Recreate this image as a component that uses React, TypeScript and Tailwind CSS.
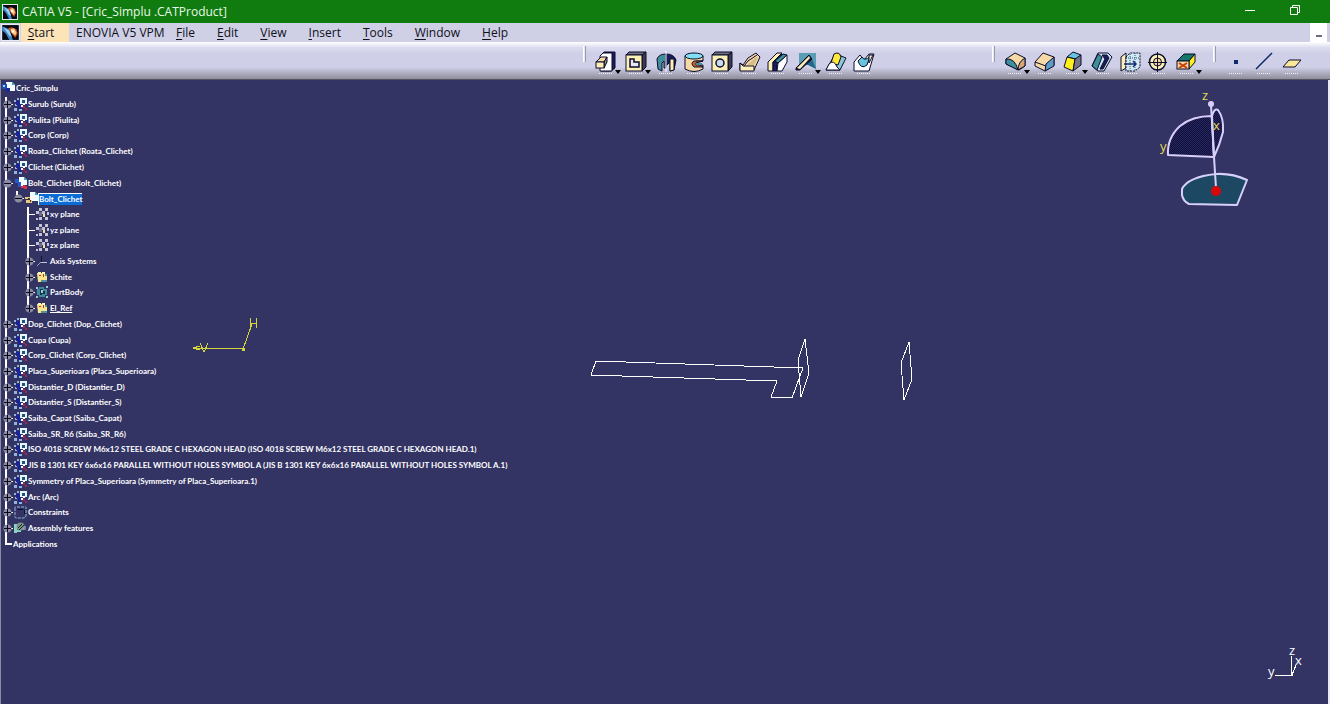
import type { ReactNode } from "react";

const INK = "#0b0b2e";
const CREAM = "#fdf0b4";
const TEAL = "#3f8f9b";
const TAN = "#f6d9a4";

function AppLogo({ size }: { size: string }) {
  return (
    <svg viewBox="0 0 16 16" preserveAspectRatio="none" className={`block shrink-0 ${size}`} aria-hidden="true">
      <rect width="16" height="16" fill="#e8e8f0" />
      <rect x="1" y="1" width="14" height="14" fill="#050a14" />
      <path d="M1 2 L7 5 L10 15 L7 15 L4 9 L1 6Z" fill="#3f86c4" />
      <path d="M2 3 L7 6 L9 12 L7 11Z" fill="#9cd0f0" />
      <path d="M6 4 L9 3 L13 5 L14 9 L12 13 L9 9Z" fill="#c8551e" />
      <path d="M8 5 L11 4 L13 8 L12 11 L9 8Z" fill="#ffc98a" />
      <path d="M9 6h2v2h-2z" fill="#fff" />
    </svg>
  );
}

type Tool = { name: string; menu?: boolean; art: ReactNode };

const sketchTools: Tool[] = [
  {
    name: "Pad",
    menu: true,
    art: (
      <>
        <path d="M9 6 L12 2 H23 V18 L19 21 H9Z" fill="#1c1c5c" stroke={INK} />
        <path d="M8 6 L11 3 H20 V21 H8Z" fill="#fff" stroke={INK} />
        <path d="M4 12 L9 7 H15 L12 12Z" fill={TAN} stroke={INK} />
        <path d="M12 12 L15 7 V12 L12 18Z" fill="#8a8a70" stroke={INK} />
        <rect x="4" y="12" width="8" height="6" fill={CREAM} stroke={INK} />
      </>
    ),
  },
  {
    name: "Pocket",
    menu: true,
    art: (
      <>
        <path d="M4 5 L7 2 H24 L20 5Z" fill="#70707c" stroke={INK} />
        <path d="M20 5 L24 2 V17 L20 21Z" fill="#3c3c4c" stroke={INK} />
        <rect x="4" y="5" width="16" height="16" fill={CREAM} stroke={INK} />
        <path d="M8 9 H12 V12 H17 V17 H8Z" fill="#e6e6f4" stroke={INK} strokeWidth="1.5" />
      </>
    ),
  },
  {
    name: "Shaft",
    art: (
      <>
        <path d="M5 9 Q7 4 14 4 V18 H12 V11 L10 13 V21 L6 19Z" fill={TEAL} stroke={INK} />
        <path d="M14 4 Q22 4 24 10 L22 20 L18 21 V12 L14 16Z" fill="#1c1c5c" stroke={INK} />
        <path d="M18 9 H22 V20 L18 21Z" fill={CREAM} stroke={INK} />
        <path d="M14 1 V22" stroke="#fff" />
      </>
    ),
  },
  {
    name: "Groove",
    art: (
      <>
        <path d="M5 6 V19 Q14 24 23 19 V15 H16 V11 H23 V6Z" fill={TAN} stroke={INK} />
        <ellipse cx="14" cy="6" rx="9" ry="3" fill="#7fe0f4" stroke={INK} />
        <path d="M23 11 H14 Q10 13 14 17 H23 L20 15 H16 V13Z" fill="#c4622e" stroke={INK} />
        <path d="M16 13 H22 V15 H16Z" fill={TEAL} />
      </>
    ),
  },
  {
    name: "Hole",
    art: (
      <>
        <path d="M4 5 L7 2 H24 L20 5Z" fill="#70707c" stroke={INK} />
        <path d="M20 5 L24 2 V17 L20 21Z" fill="#3c3c4c" stroke={INK} />
        <rect x="4" y="5" width="16" height="16" fill={CREAM} stroke={INK} />
        <circle cx="12" cy="13" r="4" fill="#c8dcf0" stroke={INK} strokeWidth="1.5" />
      </>
    ),
  },
  {
    name: "Rib",
    art: (
      <>
        <path d="M4 13 L7 15 L12 8 L20 3 L24 7 L18 20 H4Z" fill={TAN} stroke={INK} />
        <path d="M4 13 L7 16 H18 V21 H4Z" fill={CREAM} stroke={INK} />
        <path d="M8 16 L12 11 L21 5" fill="none" stroke={INK} />
        <path d="M11 15 L20 7 L22 8 L18 15Z" fill="#d9bd88" />
      </>
    ),
  },
  {
    name: "Slot",
    art: (
      <>
        <path d="M4 12 L13 3 H18 L9 12 V21 H4Z" fill={CREAM} stroke={INK} />
        <path d="M9 12 L18 4 L19 8 L13 14 V21 H9Z" fill="#1c1c5c" stroke={INK} />
        <path d="M14 13 L23 5 V12 L18 21 H13Z" fill="#fff" stroke={INK} />
        <path d="M14 13 L23 5 L19 4 L11 11Z" fill={TEAL} stroke={INK} />
      </>
    ),
  },
  {
    name: "Stiffener",
    menu: true,
    art: (
      <>
        <path d="M7 3 H24 V19 L20 15 H7Z" fill="#5a9eb4" />
        <path d="M16 7 L20 9 L24 19 L14 14Z" fill="#26668a" />
        <path d="M4 18 L17 5 L20 9 L8 20 H4Z" fill="#1c1c3c" stroke={INK} />
        <path d="M5 18 L17 6 L18 8 L8 19Z" fill={CREAM} />
      </>
    ),
  },
  {
    name: "Multi-sections Solid",
    art: (
      <>
        <path d="M4 20 L12 6 Q16 1 19 6 L24 8 L18 20Z" fill="#8cc8d4" stroke={INK} />
        <path d="M9 13 L12 4 Q17 1 19 7 L16 15Z" fill="#ffe83c" stroke={INK} />
        <path d="M4 20 L7 14 Q12 9 15 17 L18 20Z" fill="#fff" stroke={INK} />
      </>
    ),
  },
  {
    name: "Removed Multi-sections Solid",
    art: (
      <>
        <path d="M4 12 L10 5 L14 10 L19 4 H24 L19 21 H4Z" fill="#fff" stroke={INK} />
        <path d="M8 11 L12 7 Q15 12 20 6 L17 15 Q11 20 8 11Z" fill="#68c4dc" stroke={INK} />
        <path d="M19 5 H23 L19 13Z" fill={CREAM} stroke={INK} />
      </>
    ),
  },
];

const dressUpTools: Tool[] = [
  {
    name: "Edge Fillet",
    menu: true,
    art: (
      <>
        <path d="M5 9 L14 3 L24 8 V16 L18 20 L5 14Z" fill={TAN} stroke={INK} />
        <path d="M5 9 Q14 8 17 20 L5 14Z" fill={TEAL} stroke={INK} />
        <path d="M17 20 Q17 12 24 8 V16Z" fill="#d6a878" stroke={INK} />
      </>
    ),
  },
  {
    name: "Chamfer",
    art: (
      <>
        <path d="M4 12 L12 3 L23 7 V15 L14 21 L4 16Z" fill={TAN} stroke={INK} />
        <path d="M14 21 L15 14 L23 7 V16Z" fill="#5c9cc8" stroke={INK} />
        <path d="M4 12 L15 16" stroke={INK} />
      </>
    ),
  },
  {
    name: "Draft Angle",
    menu: true,
    art: (
      <>
        <path d="M8 7 L14 2 L22 5 L17 9Z" fill="#68c4dc" stroke={INK} />
        <path d="M8 7 L16 9 L14 21 L5 17Z" fill="#fff01c" stroke={INK} />
        <path d="M16 9 L22 5 V15 L14 21Z" fill="#747484" stroke={INK} />
      </>
    ),
  },
  {
    name: "Shell",
    art: (
      <>
        <path d="M3 16 L9 3 H19 L23 7 L15 21 H9Z" fill="#c8e4f0" stroke={INK} />
        <path d="M3 16 L9 4 L13 7 L8 20Z" fill={TEAL} stroke={INK} />
        <path d="M13 5 H18 L20 8 L14 19 H11 L16 9Z" fill="#1c1c5c" stroke={INK} />
      </>
    ),
  },
  {
    name: "Thickness",
    art: (
      <>
        <path d="M4 7 L9 3 V18 L4 21Z" fill={CREAM} stroke={INK} />
        <path d="M9 7 L13 3 H23 V17 L18 21 H9Z" fill="#d4e8f4" stroke={INK} strokeDasharray="2 1" />
        <path d="M13 4 V21 M18 3 V21 M9 8 H22" stroke="#1c5878" strokeDasharray="1 1" />
        <path d="M7 14 H19 M16 11 L19 14 L16 17" fill="none" stroke="#142c70" strokeWidth="1.5" />
      </>
    ),
  },
  {
    name: "Thread and Tap",
    art: (
      <>
        <circle cx="12.5" cy="12" r="8" fill={CREAM} stroke={INK} strokeWidth="1.5" />
        <circle cx="12.5" cy="12" r="4" fill={TAN} stroke={INK} />
        <path d="M3 12.5 H22 M12.5 2 V22" stroke={INK} />
      </>
    ),
  },
  {
    name: "Remove Face",
    menu: true,
    art: (
      <>
        <path d="M4 11 L11 4 H22 L16 11Z" fill="#16786c" stroke={INK} />
        <path d="M16 11 L22 4 V12 L16 19Z" fill="#fff01c" stroke={INK} />
        <rect x="4" y="11" width="12" height="8" fill={TAN} stroke={INK} />
        <path d="M6 13 L14 18 M14 13 L6 18" stroke="#c83c08" strokeWidth="2" />
      </>
    ),
  },
];

const referenceTools: Tool[] = [
  { name: "Point", art: <rect x="12" y="10" width="4" height="4" fill="#0c2c68" /> },
  { name: "Line", art: <path d="M6 19 L22 3" stroke="#0c2464" strokeWidth="1.5" /> },
  {
    name: "Plane",
    art: <path d="M5 17 L11 10 H23 L17 17Z" fill="#fbe79a" stroke={INK} />,
  },
];

function ToolGroup({ tools, label }: { tools: Tool[]; label: string }) {
  return (
    <div role="toolbar" aria-label={label} className="flex gap-[6px]">
      <span className="mt-1 h-4 w-[3px] border-r border-l border-r-[#9a9aae] border-l-white bg-[#e8e8f4]" />
      <div className="flex pt-2">
        {tools.map((t) => (
          <button
            key={t.name}
            type="button"
            aria-label={t.name}
            className={t.menu ? "flex h-6 w-[30px] items-end" : "flex h-6 w-7"}
          >
            <svg viewBox="0 0 28 24" className="h-6 w-7 shrink-0" fill="none" aria-hidden="true">
              {t.art}
              <path d="M7 23.5 H21" stroke="#f4f4fc" strokeDasharray="1 1" shapeRendering="crispEdges" />
            </svg>
            {t.menu && (
              <svg viewBox="0 0 6 4" className="-ml-[5px] h-1 w-[6px] shrink-0" aria-hidden="true">
                <path d="M0 0 H6 L3 4Z" fill="#000" />
              </svg>
            )}
          </button>
        ))}
      </div>
    </div>
  );
}

type Kind = "root" | "product" | "openProduct" | "part" | "plane" | "axis" | "set" | "body" | "constraints" | "features";

function NodeIcon({ kind }: { kind: Kind }) {
  const art: Record<Kind, ReactNode> = {
    root: (
      <>
        <path d="M4 0 H10 L13 3 V9 H5Z" fill="#f4feff" />
        <path d="M10 0 L13 3 H10Z" fill="#3ba4b4" />
        <rect x="0" y="2" width="5" height="5" fill="#1c4ec0" />
        <rect x="1" y="3" width="2" height="2" fill="#9cd0ff" />
        <rect x="4" y="6" width="4" height="4" fill="#1a2a90" />
      </>
    ),
    product: (
      <>
        <path d="M0 2h2v2h-2z M3 0h2v2h-2z M0 10h3v3h-3z M5 11h3v2h-3z M1 6h2v2h-2z" fill="#8fb4de" />
        <path d="M2 3h4v4h-4z M4 7h3v4h-3z" fill="#1a2496" />
        <path d="M6 0h7v6h-7z" fill="#e4f6fb" />
        <path d="M8 2h3v3h-3z" fill="#20547c" />
        <path d="M7 7h2v2h-2z M9 5h2v2h-2z" fill="#fff" />
        <path d="M9 8h2v2h-2z M11 10h2v2h-2z" fill="#b0244c" />
      </>
    ),
    openProduct: (
      <>
        <path d="M5 0 H10 L13 3 V8 H5Z" fill="#f4feff" />
        <path d="M10 0 L13 3 H10Z" fill="#3ba4b4" />
        <path d="M1 2h4v4h-4z M4 5h3v5h-3z" fill="#2458cc" />
        <path d="M7 8h4v3h-4z M10 9h3v3h-3z" fill="#d83048" />
        <path d="M7 7h2v2h-2z" fill="#fff" />
      </>
    ),
    part: (
      <>
        <path d="M5 0 H10 L13 3 V9 H5Z" fill="#f4feff" />
        <path d="M10 0 L13 3 H10Z" fill="#3ba4b4" />
        <path d="M0 5h5v2h-5z M1 8h6v3h-6z" fill="#e8c884" />
        <path d="M3 6h2v2h-2z M5 8h1v2h-1z" fill="#503018" />
      </>
    ),
    plane: (
      <>
        <path d="M3 0h3v3h-3z M9 0h3v3h-3z M0 3h3v3h-3z M6 3h3v3h-3z M3 9h3v3h-3z M9 9h3v3h-3z M0 10h2v2h-2z M11 4h2v3h-2z" fill="#c4c4d4" />
        <path d="M3 4h3v4h-3z" fill="#6c6c90" />
        <path d="M7 6h2v3h-2z" fill="#f4e8a0" />
      </>
    ),
    axis: (
      <>
        <path d="M5.5 1 V7" stroke="#111130" />
        <path d="M5 7.5 H11" stroke="#c4c4d8" />
        <path d="M5 7 L1 11" stroke="#a0a0b8" />
      </>
    ),
    set: (
      <>
        <path d="M1 2h8v2h2v7h-9z" fill="#f7e58e" />
        <path d="M2 1h3v2h-3z M6 1h3v2h-3z" fill="#fff4b8" />
        <path d="M3 4h2v1h-2z M7 3h1v3h-1z" fill="#c03828" />
        <path d="M9 3h2v2h-2z M5 9h6v2h-6z" fill="#4f8e9c" />
      </>
    ),
    body: (
      <>
        <path d="M3 1h5v2h3v6h-2v2h-6v-2h-2v-6h2z" fill="#3e8c98" />
        <path d="M4 3h3v2h2v3h-3v1h-2z" fill="#16324e" />
        <path d="M5 4h2v3h-2z M0 1h2v2h-2z M10 0h2v2h-2z M10 10h2v2h-2z M0 10h2v2h-2z" fill="#9ccad4" />
      </>
    ),
    constraints: (
      <>
        <path d="M1 3 Q0 0 3 1 H10 Q13 0 12 3 V9 Q12 12 9 12 H3 Q0 12 1 9Z" fill="#333364" stroke="#8fbcd8" strokeDasharray="3 1" />
        <path d="M4 3.5 H9 M10.5 4 V8" stroke="#0a0a28" />
      </>
    ),
    features: (
      <>
        <path d="M0 2h3v9h-3z M3 8h4v2h-4z" fill="#8cd0c0" />
        <circle cx="6.5" cy="4.5" r="4" fill="#7c948c" />
        <path d="M4 6 L8 2 M5 8 L10 3" stroke="#182420" />
        <path d="M9 7 H12 M10 5 H12" stroke="#c4c4d4" />
      </>
    ),
  };
  return (
    <svg viewBox="0 0 13 13" className="h-[13px] w-[13px] shrink-0" fill="none" aria-hidden="true">
      {art[kind]}
    </svg>
  );
}

function Expander({ open, name }: { open?: boolean; name: string }) {
  return (
    <button type="button" aria-label={`${open ? "Collapse" : "Expand"} ${name}`} aria-expanded={!!open} className="relative z-10 flex w-[11px] shrink-0 justify-center">
      <svg viewBox="0 0 11 9" className="h-[9px] w-[11px] shrink-0" aria-hidden="true">
        <rect x="8" y="4" width="3" height="1" fill="#fff" />
        <circle cx="5.5" cy="4.5" r="4" fill="#8c8ca0" />
        <path d={open ? "M2 4.5 H9" : "M2 4.5 H9 M5.5 1 V8"} stroke="#06061c" />
      </svg>
    </button>
  );
}

type Rail = "none" | "through" | "upper";

function Column({ rail, children }: { rail: Rail; children?: ReactNode }) {
  const span = { none: "hidden", through: "inset-y-0", upper: "top-0 bottom-1/2" }[rail];
  return (
    <span className="relative flex w-[11px] shrink-0 items-center self-stretch">
      <span className={`absolute left-[3px] w-[2px] bg-white ${span}`} />
      {children}
    </span>
  );
}

type Row = { text: string; kind: Kind; level: 1 | 2 | 3; open?: boolean; leaf?: boolean; last?: boolean; selected?: boolean; underline?: boolean };

const product = (text: string): Row => ({ text, kind: "product", level: 1 });

const rows: Row[] = [
  product("Surub (Surub)"),
  product("Piulita (Piulita)"),
  product("Corp (Corp)"),
  product("Roata_Clichet (Roata_Clichet)"),
  product("Clichet (Clichet)"),
  { text: "Bolt_Clichet (Bolt_Clichet)", kind: "openProduct", level: 1, open: true },
  { text: "Bolt_Clichet", kind: "part", level: 2, open: true, selected: true },
  { text: "xy plane", kind: "plane", level: 3, leaf: true },
  { text: "yz plane", kind: "plane", level: 3, leaf: true },
  { text: "zx plane", kind: "plane", level: 3, leaf: true },
  { text: "Axis Systems", kind: "axis", level: 3 },
  { text: "Schite", kind: "set", level: 3 },
  { text: "PartBody", kind: "body", level: 3 },
  { text: "El_Ref", kind: "set", level: 3, last: true, underline: true },
  product("Dop_Clichet (Dop_Clichet)"),
  product("Cupa (Cupa)"),
  product("Corp_Clichet (Corp_Clichet)"),
  product("Placa_Superioara (Placa_Superioara)"),
  product("Distantier_D (Distantier_D)"),
  product("Distantier_S (Distantier_S)"),
  product("Saiba_Capat (Saiba_Capat)"),
  product("Saiba_SR_R6 (Saiba_SR_R6)"),
  product("ISO 4018 SCREW M6x12 STEEL GRADE C HEXAGON HEAD (ISO 4018 SCREW M6x12 STEEL GRADE C HEXAGON HEAD.1)"),
  product("JIS B 1301 KEY 6x6x16 PARALLEL WITHOUT HOLES SYMBOL A (JIS B 1301 KEY 6x6x16 PARALLEL WITHOUT HOLES SYMBOL A.1)"),
  product("Symmetry of Placa_Superioara (Symmetry of Placa_Superioara.1)"),
  product("Arc (Arc)"),
  { text: "Constraints", kind: "constraints", level: 1 },
  { text: "Assembly features", kind: "features", level: 1 },
];

function TreeRow({ row }: { row: Row }) {
  const expander = row.leaf ? <span className="ml-1 h-px w-[7px] bg-white" /> : <Expander open={row.open} name={row.text} />;
  return (
    <li className="flex items-center">
      <Column rail="through">{row.level === 1 && expander}</Column>
      {row.level === 2 && <Column rail="upper">{expander}</Column>}
      {row.level === 3 && (
        <>
          <Column rail="none" />
          <Column rail={row.last ? "upper" : "through"}>{expander}</Column>
        </>
      )}
      <span className="ml-px flex">
        <NodeIcon kind={row.kind} />
      </span>
      <span
        className={
          row.selected
            ? "border-t border-l border-white bg-[#0a6cd6] leading-[11px]"
            : row.underline
              ? "ml-px leading-[11px] underline"
              : "ml-px leading-[11px]"
        }
      >
        {row.text}
      </span>
    </li>
  );
}

function SpecTree() {
  return (
    <ul aria-label="Specification tree" className="relative grid h-[471px] auto-rows-fr pl-px font-[Lato,'Noto_Sans',sans-serif] text-[8px] font-bold whitespace-nowrap text-white">
      <li className="flex items-center">
        <NodeIcon kind="root" />
        <span className="ml-px leading-[11px]">Cric_Simplu</span>
      </li>
      {rows.map((row, i) => (
        <TreeRow key={i} row={row} />
      ))}
      <li className="flex items-center">
        <Column rail="upper">
          <span className="ml-[3px] h-[2px] w-[7px] bg-white" />
        </Column>
        <span className="leading-[11px]">Applications</span>
      </li>
    </ul>
  );
}

function Geometry() {
  return (
    <svg viewBox="0 0 930 420" className="absolute top-0 left-0 h-[420px] w-[930px]" fill="none" shapeRendering="crispEdges" aria-hidden="true">
      <g stroke="#fff">
        <path d="M595 281 L802 288 L791 318 L770 317 L776 301 L590 295Z" />
        <path d="M804 259 L797 280 L800 317 L808 293Z" />
        <path d="M908 262 L900 283 L903 320 L911 299Z" />
      </g>
      <g stroke="#d4d43c">
        <path d="M192 268 H204 L242 269 L251 244" />
        <path d="M192 268 L199 266 M192 268 L199 270" />
        <path d="M199 263 L203 272 L207 263 M249 238 V248 M255 238 V248 M249 243 H255" />
      </g>
      <rect x="241" y="268" width="3" height="3" fill="#d4d43c" />
    </svg>
  );
}

function Compass() {
  return (
    <svg viewBox="0 0 188 135" className="absolute top-0 right-0 h-[135px] w-[188px]" fill="none" aria-label="Compass">
      <defs>
        <pattern id="hatch" width="2" height="2" patternUnits="userSpaceOnUse">
          <rect width="2" height="2" fill="#10103c" />
          <rect width="1" height="1" fill="#26265c" />
          <rect x="1" y="1" width="1" height="1" fill="#26265c" />
        </pattern>
      </defs>
      <g stroke="#d8d0fa" strokeWidth="2" strokeLinejoin="round">
        <path d="M72 36 Q52 36 40 46 Q27 58 28 75 L74 77Z" fill="url(#hatch)" />
        <path d="M72 36 Q74 28 78 30 Q84 38 83 52 Q80 64 74 77Z" fill="url(#hatch)" />
        <path d="M42 109 V115 Q43 121 49 124 L97 125 L107 100 Q92 93 76 94 Q48 97 42 109Z" fill="#1c4864" />
        <path d="M71 25 L74 77 L76 108" />
      </g>
      <circle cx="71" cy="24" r="3" fill="#d8d0fa" />
      <circle cx="76" cy="111" r="5" fill="#d80808" />
      <g fill="#e8dc54" className="font-['Open_Sans',sans-serif] text-[13px]">
        <text x="62" y="20">z</text>
        <text x="73" y="50">x</text>
        <text x="20" y="71">y</text>
      </g>
    </svg>
  );
}

function AxisTriad() {
  return (
    <svg viewBox="0 0 69 64" className="absolute right-0 bottom-0 h-16 w-[69px]" fill="none" aria-label="Axis orientation">
      <path d="M16 35.5 H34 M32.5 16 V35 M33 35 L37 25" stroke="#fff" shapeRendering="crispEdges" />
      <g fill="#fff" className="font-['Open_Sans',sans-serif] text-[13px]">
        <text x="30" y="15">z</text>
        <text x="36" y="25">x</text>
        <text x="9" y="36">y</text>
      </g>
    </svg>
  );
}

const menus = ["File", "Edit", "View", "Insert", "Tools", "Window", "Help"];

function Mnemonic({ text }: { text: string }) {
  return (
    <>
      <span className="underline underline-offset-2">{text[0]}</span>
      {text.slice(1)}
    </>
  );
}

export default function App() {
  return (
    <div className="flex min-h-screen flex-col bg-[#333364] font-['Open_Sans','Noto_Sans',sans-serif] text-xs whitespace-nowrap text-[#101018]">
      <header className="flex h-[23px] items-center gap-1 bg-[#107c10] pl-[2px] text-[#e8f8e8]">
        <AppLogo size="h-4 w-4" />
        <h1>CATIA V5 - [Cric_Simplu .CATProduct]</h1>
        <div className="ml-auto flex gap-[33px] pr-[29px]">
          <button type="button" aria-label="Minimize" className="flex">
            <svg viewBox="0 0 12 12" className="h-3 w-3" aria-hidden="true">
              <path d="M1 6.5 H11" stroke="#fff" />
            </svg>
          </button>
          <button type="button" aria-label="Restore" className="flex pb-1">
            <svg viewBox="0 0 12 12" className="h-3 w-3" fill="none" stroke="#fff" aria-hidden="true">
              <path d="M1.5 3.5 H8.5 V10.5 H1.5Z M3.5 3.5 V1.5 H10.5 V8.5 H8.5" />
            </svg>
          </button>
        </div>
      </header>

      <nav aria-label="Main menu" className="flex h-[19px] items-stretch bg-[#cfcfe6]">
        <span className="flex w-[21px] items-center pl-px">
          <AppLogo size="h-[17px] w-[19px]" />
        </span>
        <button type="button" className="w-12 bg-[#fde3b8] pr-2">
          <Mnemonic text="Start" />
        </button>
        <button type="button" className="w-24 pl-[7px] text-left">
          ENOVIA V5 VPM
        </button>
        {menus.map((m) => (
          <button key={m} type="button" className="px-[11px]">
            <Mnemonic text={m} />
          </button>
        ))}
        <button type="button" aria-label="Minimize document" className="mr-[3px] ml-auto flex w-[17px] items-end justify-center bg-white pb-[5px]">
          <span className="h-[2px] w-[6px] bg-[#6c6c7c]" />
        </button>
      </nav>

      <div className="flex h-[38px] justify-end border-b border-[#55555f] bg-[linear-gradient(to_bottom,#ffffff,#dcdcf0_15%,#cfcfe8_30%,#cfcfe8_68%,#8e8e9c)] pr-6">
        <div className="flex h-full gap-[114px]">
          <ToolGroup label="Sketch-based features" tools={sketchTools} />
          <div className="flex gap-[10px]">
            <ToolGroup label="Dress-up features" tools={dressUpTools} />
            <ToolGroup label="Reference elements" tools={referenceTools} />
          </div>
        </div>
      </div>

      <main className="relative grow border-r-2 border-l border-r-[#e8e8f4] border-l-[#8c8c9c] pt-px">
        <Geometry />
        <SpecTree />
        <Compass />
        <AxisTriad />
      </main>
    </div>
  );
}
